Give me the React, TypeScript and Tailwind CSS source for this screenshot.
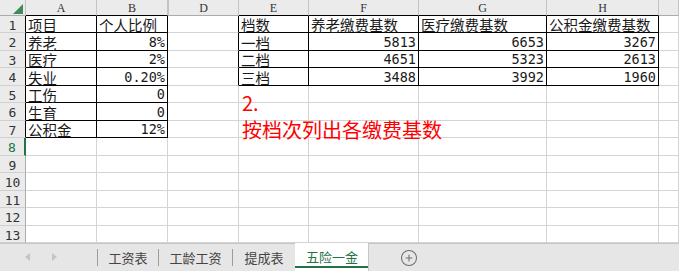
import { CirclePlus } from 'lucide-react';

type Cell = { v: string; num?: boolean };

const t = (v: string): Cell => ({ v });
const n = (v: string): Cell => ({ v, num: true });
const e: Cell = { v: '' };

const cols = ['A', 'B', 'D', 'E', 'F', 'G', 'H', ''];

const rows: Cell[][] = [
  [t('项目'), t('个人比例'), e, t('档数'), t('养老缴费基数'), t('医疗缴费基数'), t('公积金缴费基数'), e],
  [t('养老'), n('8%'), e, t('一档'), n('5813'), n('6653'), n('3267'), e],
  [t('医疗'), n('2%'), e, t('二档'), n('4651'), n('5323'), n('2613'), e],
  [t('失业'), n('0.20%'), e, t('三档'), n('3488'), n('3992'), n('1960'), e],
  [t('工伤'), n('0'), e, e, e, e, e, e],
  [t('生育'), n('0'), e, e, e, e, e, e],
  [t('公积金'), n('12%'), e, e, e, e, e, e],
  [e, e, e, e, e, e, e, e],
  [e, e, e, e, e, e, e, e],
  [e, e, e, e, e, e, e, e],
  [e, e, e, e, e, e, e, e],
  [e, e, e, e, e, e, e, e],
  [e, e, e, e, e, e, e, e],
];

const gridCols = 'grid grid-cols-[26px_71px_71px_71px_70px_110px_128px_112px_1fr]';
const cjk = "font-['Noto_Sans_CJK_SC',sans-serif]";
const mono = "font-['DejaVu_Sans_Mono','Noto_Sans_CJK_SC',monospace]";

function cellClass(r: number, c: number) {
  const inT1 = r <= 7 && c <= 1;
  const inT2 = r <= 4 && c >= 3 && c <= 6;
  const rightBlack = inT1 || inT2 || (r <= 4 && c === 2);
  return [
    'border-r border-b flex items-end whitespace-nowrap',
    rightBlack ? 'border-r-black' : 'border-r-[#d4d4d4]',
    inT1 || inT2 ? 'border-b-black' : 'border-b-[#d4d4d4]',
  ].join(' ');
}

function Arrow({ dir }: { dir: 'l' | 'r' }) {
  return (
    <svg width="5" height="8" viewBox="0 0 5 8" className="absolute top-[9px]" style={{ left: dir === 'l' ? 25 : 52 }}>
      <polygon points={dir === 'l' ? '5,0 0,4 5,8' : '0,0 5,4 0,8'} fill="#c4c4c4" />
    </svg>
  );
}

export default function App() {
  return (
    <div className="w-[679px] h-[271px] bg-white overflow-hidden relative flex flex-col text-[#1a1a1a]">
      {/* column headers */}
      <div className={`${gridCols} h-[16px] bg-[#ebebeb]`}>
        <div className="border-r border-b border-r-[#c4c4c4] border-b-[#ababab] relative">
          <svg width="10" height="10" viewBox="0 0 10 10" className="absolute left-[13px] top-[4px]">
            <polygon points="10,0 10,10 0,10" fill="#3f8a57" />
          </svg>
        </div>
        {cols.map((col, c) => (
          <div
            key={c}
            className={`border-r border-b border-r-[#c4c4c4] flex items-center justify-center font-['Liberation_Serif',serif] text-[12px] leading-none text-[#333] ${
              c <= 1 || (c >= 3 && c <= 6) ? 'border-b-black' : 'border-b-[#ababab]'
            } ${c === 2 ? 'border-l border-l-[#c4c4c4]' : ''}`}
          >
            {col}
          </div>
        ))}
      </div>

      {/* rows */}
      {rows.map((row, i) => {
        const r = i + 1;
        const selected = r === 8;
        return (
          <div key={r} className={`${gridCols} ${r % 2 === 1 ? 'h-[17px]' : 'h-[18px]'}`}>
            <div
              className={`bg-[#ebebeb] border-b border-b-[#d0d0d0] flex items-center justify-center pt-[2px] ${mono} text-[13px] leading-none ${
                selected
                  ? 'border-r-2 border-r-[#217346] text-[#217346]'
                  : r <= 7
                    ? 'border-r border-r-black text-[#333]'
                    : 'border-r border-r-[#ababab] text-[#333]'
              }`}
            >
              {r}
            </div>
            {row.map((cell, c) => (
              <div key={c} className={cellClass(r, c)}>
                {cell.v &&
                  (cell.num ? (
                    <span className={`w-full text-right pr-[2px] ${mono} text-[13.5px] leading-[15px]`}>{cell.v}</span>
                  ) : (
                    <span className={`pl-[2px] ${cjk} text-[14.5px] leading-[15px]`}>{cell.v}</span>
                  ))}
              </div>
            ))}
          </div>
        );
      })}

      {/* sheet tabs */}
      <div className={`flex h-[28px] bg-[#e6e6e6] ${cjk} text-[13px] text-[#444]`}>
        <div className="flex items-center border-t border-[#c6c6c6] w-[295px]">
          <div className="w-[97px] h-full relative">
            <Arrow dir="l" />
            <Arrow dir="r" />
          </div>
          <div className="w-px h-[17px] bg-[#9c9c9c]" />
          <div className="w-[60px] text-center">工资表</div>
          <div className="w-px h-[17px] bg-[#9c9c9c]" />
          <div className="w-[73px] text-center">工龄工资</div>
          <div className="w-px h-[17px] bg-[#9c9c9c]" />
          <div className="w-[62px] text-center">提成表</div>
        </div>
        <div className="w-[74px] bg-white border-r border-[#c6c6c6] relative flex items-center justify-center text-[#217346]">
          <span className="pl-[1px]">五险一金</span>
          <div className="absolute left-0 right-0 bottom-[3px] h-[2px] bg-[#217346]" />
        </div>
        <div className="flex-1 border-t border-[#c6c6c6] flex items-center pl-[31px]">
          <CirclePlus size={18} strokeWidth={1.4} color="#6e6e6e" />
        </div>
      </div>

      {/* floating text box */}
      <div className={`absolute left-[242px] top-[89px] ${cjk} text-[20px] leading-[27px] text-[#ff0000]`}>
        <div>2.</div>
        <div>按档次列出各缴费基数</div>
      </div>
    </div>
  );
}
